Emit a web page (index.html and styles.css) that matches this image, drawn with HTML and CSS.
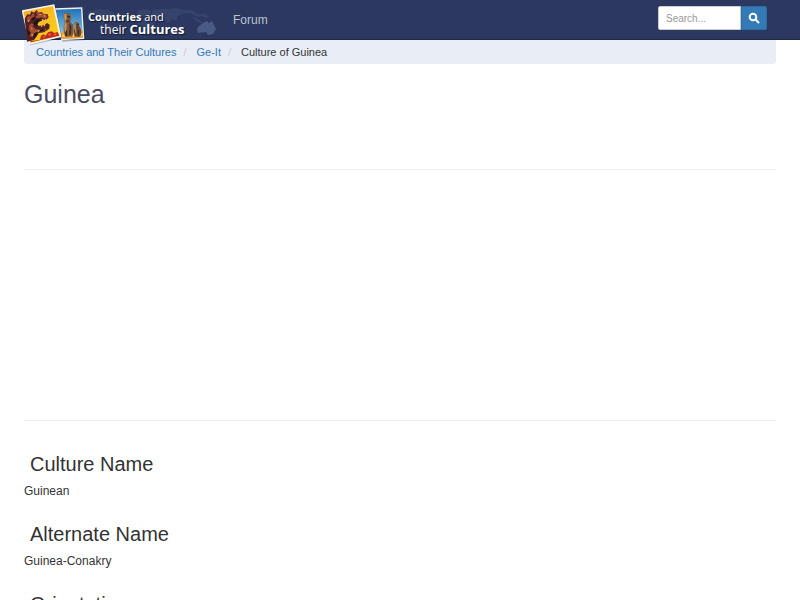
FILE: index.html
```html
<!DOCTYPE html>
<html lang="en">
<head>
    <meta charset="UTF-8">
    <meta name="viewport" content="width=device-width, initial-scale=1.0">
    <title>Culture of Guinea</title>
    <link rel="stylesheet" href="styles.css">
</head>
<body>
    <nav class="navbar">
        <a class="brand" href="/" aria-label="Countries and their Cultures">
            <svg class="brand-map" viewBox="0 0 132 30" aria-hidden="true">
                <path d="M2 5l9-3 12 1 6 4-5 4-5 2-2 5-4-2-3-6-6 1zM20 17l7 2 1 4-4 4-3-4zM51 5l5-3 8 1 1 3-6 3-7-1zM53 13l9-1 7 4-1 5-5 7-5-5-1-4-5-2zM66 3l9-1 8 0 7-1 12 3-5 2-5 3-2 5-3-2-5 4-5-5-6-1-5 1zM98 3l8 0 6 4 7 0 5 3-5 1-3-2-5 1-4-3-7-1zM106 10l6 2 5 4-6-1z"/>
                <path class="australia" d="M112 20l5-4 4-2 2 2 3-2 2 4 2 4-3 5-5 1-2-3-8 1-1-3z"/>
            </svg>
            <svg class="brand-photos" viewBox="6 6 192 135" aria-hidden="true">
                <defs>
                    <linearGradient id="sky" x1="0" y1="0" x2="0" y2="1">
                        <stop offset="0" stop-color="#1c72b8"/>
                        <stop offset="1" stop-color="#a5d5e6"/>
                    </linearGradient>
                    <linearGradient id="sun" x1="0" y1="0" x2="1" y2="1">
                        <stop offset="0" stop-color="#f6a928"/>
                        <stop offset="1" stop-color="#fad514"/>
                    </linearGradient>
                </defs>
                <!-- statues -->
                <path fill="#121a31" opacity=".3" d="M104 27l85-3 7 96-69 5z"/>
                <path fill="#f0f1ee" d="M103 25l84-3 6 95-69 4z"/>
                <path fill="url(#sky)" d="M107 29l76-3 6 87-64 4z"/>
                <path fill="#e8a22f" d="M122 98l18-5 26 3 22-5 1 22-64 4z"/>
                <path fill="#f7cf64" d="M125 104l20-3 20 5 24-6v6l-35 4-28 1z"/>
                <path fill="#80583a" d="M132 40l10-2 9 3 2 13-2 12 9 8 1 18-4 18h-22l-4-18 0-16 4-9-4-15z"/>
                <path fill="#c59a68" d="M133 42l6-1 1 14-4 9 4 8-2 25-4-5-1-17 4-7-4-13z"/>
                <path fill="#3d2820" d="M141 47l9 2v4l-8-1zM140 61l9 1-3 4-5-1zM148 70l6 8-1 24-6 3 2-17zM136 100l4-12 2 20-5 1z"/>
                <path fill="#70492e" d="M163 69l6-3 8 3 1 11 5 7 1 14-4 9h-16l-3-15 4-14z"/>
                <path fill="#c78c4c" d="M165 70l4-1-1 12 1 22-3-6-1-9 1-7z"/>
                <path fill="#342820" d="M170 72l6 1v3l-6-1zM170 80l5 1-2 3zM174 87l4 6-2 14-3-4z"/>
                <!-- carved dragon -->
                <path fill="#10172c" opacity=".3" d="M8 34l97-18 22 98-97 22z"/>
                <path fill="#f7f5f0" d="M5 31l98-18 21 98-96 23z"/>
                <path fill="url(#sun)" d="M10 35l89-17 19 89-86 21z"/>
                <path fill="#54221e" d="M14 56l8-13 8 1 4-10 8 4 8-8 5 8 10-2 6 6 11 0 4 10-8 8-14-1-13 5-3 8 7 6 18-2 8-7 8 5-1 12-16 11-16 2-7 12-7 9-21 5z"/>
                <path fill="#a54c35" d="M20 53l7-6 5 3 6-11 6 5-3 10-7 2-6 9-7-3zM48 38l7-2 3 5 9-2 13 6 3 6-8 5-11-4-10 3-8-4 7-5zM27 77l7-7 7 2-3 8 9 8 13 2 16-6 4 4-12 7-17 2-7 12-7-6-6 8-3-16z"/>
                <path fill="#1f1519" d="M33 56l7-5 6 3-4 6-6 1zM44 62l10-4 15 2-13 6-4 8 5 5-10-1-7-7zM22 89l10 8-2 8-6-2zM43 99l9-3-3 9-6 8-3-4zM60 90l17-6-8 10-12 2z"/>
                <path fill="#e4a077" d="M24 60l4 1-2 6-3-2zM57 43l5-1 2 3-5 1zM71 45l7 3-6 2zM34 82l4 4-4 2zM51 92l10-1-6 4zM34 104l4-3 1 7-4 2z"/>
                <path fill="#f4e9c6" d="M66 58l2 5 2-5zM74 57l2 4 2-5zM63 81l2-5 2 4zM72 79l2-5 2 4z"/>
                <path fill="#bd291f" d="M60 119l3-12 8-4 6 4 7-10 11-3 8 5 10-3 5 11-86 20-2-3z"/>
                <path fill="#ef5838" d="M84 103l6-4 4 5-7 4zM101 101l8-2 0 7-8 1zM68 110l6-2 1 5-6 1z"/>
            </svg>
            <span class="brand-text">
                <span class="brand-line"><b>Countries</b> and</span>
                <span class="brand-line brand-second">their <b>Cultures</b></span>
            </span>
        </a>
        <a class="nav-link" href="/forum/">Forum</a>
        <form class="search" action="/search" method="get">
            <input type="text" name="q" placeholder="Search..." aria-label="Search">
            <button type="submit" aria-label="Search">
                <svg viewBox="0 0 12 12" aria-hidden="true">
                    <circle cx="5" cy="5" r="3.3"/>
                    <path d="M7.5 7.5l3.5 3.5"/>
                </svg>
            </button>
        </form>
    </nav>

    <div class="container">
        <ol class="breadcrumb">
            <li><a href="/">Countries and Their Cultures</a></li>
            <li><a href="/Ge-It/">Ge-It</a></li>
            <li>Culture of Guinea</li>
        </ol>

        <h1>Guinea</h1>

        <div class="ad-space"></div>

        <h2>Culture Name</h2>
        <p>Guinean</p>

        <h2>Alternate Name</h2>
        <p>Guinea-Conakry</p>

        <h2>Orientation</h2>
    </div>
</body>
</html>
```
FILE: styles.css
```css
/* Page */
* {
    box-sizing: border-box;
}

body {
    margin: 0;
    font-family: "Liberation Sans", Arial, sans-serif;
    font-size: 12px;
    line-height: 18px;
    color: #333;
    background-color: #fff;
}

a {
    color: #337ab7;
    text-decoration: none;
}

/* Top bar */
.navbar {
    display: flex;
    align-items: center;
    height: 40px;
    padding: 0 33px 0 22px;
    background-color: #2c3860;
    border-bottom: 1px solid #202944;
}

.brand {
    position: relative;
    display: flex;
    align-items: flex-start;
    width: 195px;
    height: 39px;
    color: #fff;
}

/* The photos hang over the bottom edge of the bar */
.brand-photos {
    position: absolute;
    top: 2px;
    left: 0;
    width: 64px;
    height: 45px;
}

.brand-map {
    position: absolute;
    top: 7px;
    left: 64px;
    width: 132px;
    height: 30px;
    fill: #36436b;
}

.brand-map .australia {
    fill: #4b5a85;
}

.brand-text {
    position: relative;
    padding: 11px 0 0 66px;
    font-family: "Open Sans", sans-serif;
    font-size: 11px;
    line-height: 12px;
    white-space: nowrap;
    text-shadow: 1px 1px 1px #10182e;
}

.brand-line {
    display: block;
}

.brand-second {
    padding-left: 12px;
    font-size: 12px;
}

.brand-second b {
    font-size: 13px;
}

.nav-link {
    padding-left: 16px;
    font-size: 12px;
    color: #bcc1cf;
}

/* Search box */
.search {
    display: flex;
    height: 24px;
    margin: 0 0 3px auto;
}

.search input {
    width: 83px;
    padding: 0 7px;
    border: 1px solid #ccc;
    border-radius: 2px 0 0 2px;
    font-family: inherit;
    font-size: 10px;
    color: #555;
}

.search input::placeholder {
    color: #999;
}

.search button {
    display: flex;
    align-items: center;
    justify-content: center;
    width: 26px;
    padding: 0;
    border: 1px solid #2e6da4;
    border-radius: 0 2px 2px 0;
    background-color: #337ab7;
    cursor: pointer;
}

.search svg {
    width: 12px;
    height: 12px;
    fill: none;
    stroke: #fff;
    stroke-width: 2;
}

/* Content */
.container {
    padding: 0 24px;
}

.breadcrumb {
    display: flex;
    margin: 0;
    padding: 3px 12px;
    border-radius: 0 0 3px 3px;
    background-color: #e9edf5;
    font-size: 11px;
    list-style: none;
}

.breadcrumb li + li::before {
    content: "/";
    padding: 0 10px 0 7px;
    color: #ccc;
}

h1 {
    margin: 16px 0 60px;
    font-size: 25px;
    font-weight: normal;
    line-height: 29px;
    color: #4c4c60;
}

.ad-space {
    height: 252px;
    border-top: 1px solid #eee;
    border-bottom: 1px solid #eee;
}

h2 {
    margin: 23px 0 7px;
    padding-left: 6px;
    font-size: 20px;
    font-weight: normal;
    line-height: 22px;
}

.ad-space + h2 {
    margin-top: 32px;
}

p {
    margin: 0;
}
```
